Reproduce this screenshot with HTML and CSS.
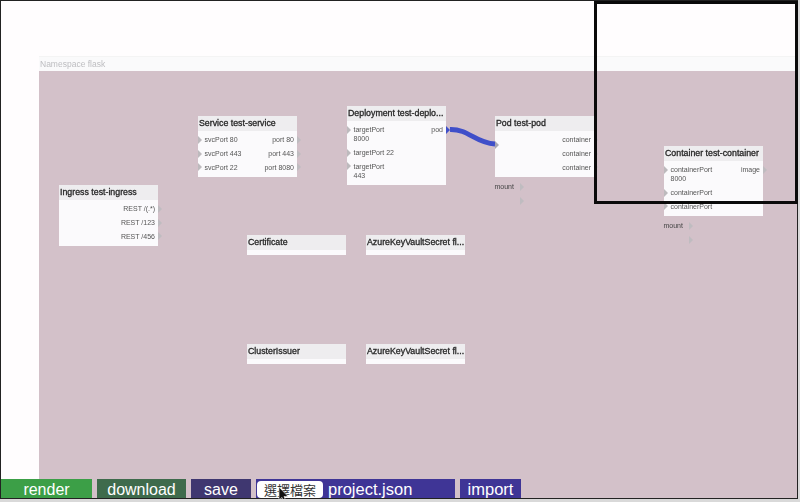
FILE: index.html
```html
<!doctype html>

<html>
    <head>
        <title>Kubernetes diagram</title>

        <link rel="stylesheet" href="styles.css">
    </head>

    <body>
        <div class="frame">
            <div class="main">
                <div class="sidebar"></div>

                <div class="namespace">
                    <div class="ns-title">Namespace flask</div>

                    <div class="canvas">
                        <svg class="links" width="758" height="407">
                            <path d="M411 58.5 C 430 58, 436 72, 456 73" />
                        </svg>

                        <div class="node ingress">
                            <div class="node-title">Ingress test-ingress</div>
                            <div class="row"><span></span><span class="out">REST /(.*)</span></div>
                            <div class="row"><span></span><span class="out">REST /123</span></div>
                            <div class="row"><span></span><span class="out">REST /456</span></div>
                        </div>

                        <div class="node service">
                            <div class="node-title">Service test-service</div>
                            <div class="row"><span class="in">svcPort 80</span><span class="out">port 80</span></div>
                            <div class="row"><span class="in">svcPort 443</span><span class="out">port 443</span></div>
                            <div class="row"><span class="in">svcPort 22</span><span class="out">port 8080</span></div>
                        </div>

                        <div class="node deployment">
                            <div class="node-title">Deployment test-deplo...</div>
                            <div class="row"><span class="in">targetPort<br>8000</span><span class="out active">pod</span></div>
                            <div class="row"><span class="in">targetPort 22</span><span></span></div>
                            <div class="row"><span class="in">targetPort<br>443</span><span></span></div>
                        </div>

                        <div class="node pod">
                            <div class="node-title">Pod test-pod</div>
                            <div class="pod-in"></div>
                            <div class="row"><span></span><span class="out">container</span></div>
                            <div class="row"><span></span><span class="out">container</span></div>
                            <div class="row"><span></span><span class="out">container</span></div>
                            <div class="mounts">
                                <div class="row"><span class="out">mount</span></div>
                                <div class="row"><span class="out">&nbsp;</span></div>
                            </div>
                        </div>

                        <div class="node container">
                            <div class="node-title">Container test-container</div>
                            <div class="row"><span class="in">containerPort<br>8000</span><span class="out">image</span></div>
                            <div class="row"><span class="in">containerPort</span><span></span></div>
                            <div class="row"><span class="in">containerPort</span><span></span></div>
                            <div class="mounts">
                                <div class="row"><span class="out">mount</span></div>
                                <div class="row"><span class="out">&nbsp;</span></div>
                            </div>
                        </div>

                        <div class="node cert">
                            <div class="node-title">Certificate</div>
                        </div>
                        <div class="node secret1">
                            <div class="node-title">AzureKeyVaultSecret fl...</div>
                        </div>
                        <div class="node issuer">
                            <div class="node-title">ClusterIssuer</div>
                        </div>
                        <div class="node secret2">
                            <div class="node-title">AzureKeyVaultSecret fl...</div>
                        </div>
                    </div>
                </div>
            </div>

            <div class="toolbar">
                <button class="btn render">render</button>
                <button class="btn download">download</button>
                <button class="btn save">save</button>
                <div class="btn file">
                    <span class="file-pick">選擇檔案</span>
                    <span>project.json</span>
                </div>
                <button class="btn import">import</button>
            </div>

            <div class="selection"></div>

            <svg class="cursor" width="12" height="18" viewBox="0 0 12 18">
                <path d="M1 1 L1 14 L4 11.5 L6 16 L8 15 L6 10.5 L10 10.5 Z" />
            </svg>
        </div>
    </body>
</html>
```

FILE: styles.css
```css
* {box-sizing: border-box;}

body {
margin: 0;
background-color: #d9d9d9;
font-family: "Liberation Sans", Arial, sans-serif;
}

.frame {
position: relative;
display: flex;
flex-direction: column;
width: 798px;
height: 499px;
border: 1px solid #222;
border-bottom: 0;
background-color: #fffdfe;
}

.main {
display: flex;
flex: 1;
min-height: 0;
}

.sidebar {width: 38px;}

.namespace {
display: flex;
flex-direction: column;
flex: 1;
padding-top: 55px;
}

.ns-title {
height: 15px;
padding-left: 1px;
font-size: 8.5px;
line-height: 15px;
color: #bdbdc0;
background-color: #fafafb;
border-top: 1px solid #f4f4f4;
filter: blur(0.3px);
}

.canvas {
position: relative;
flex: 1;
background-color: #d3c1c9;
filter: blur(0.3px);
}

.links {
position: absolute;
left: 0;
top: 0;
}

.links path {
fill: none;
stroke: #3f4fc9;
stroke-width: 5;
}

/* nodes sit on a free canvas */
.node {
position: absolute;
width: 99.5px;
padding-bottom: 2.6px;
background-color: #fbfafc;
font-size: 7px;
line-height: 9px;
color: #555;
}

.ingress {left: 19.5px; top: 114px;}
.service {left: 158.5px; top: 45px;}
.deployment {left: 307.5px; top: 35px;}
.pod {left: 455.5px; top: 45px;}
.container {left: 624.5px; top: 75px;}
.cert {left: 207.5px; top: 163.5px;}
.secret1 {left: 326.5px; top: 163.5px;}
.issuer {left: 207.5px; top: 272.5px;}
.secret2 {left: 326.5px; top: 272.5px;}

.cert, .secret1, .issuer, .secret2 {height: 20px;}

.node-title {
height: 15px;
margin-bottom: 2px;
padding-left: 1.5px;
font-size: 8.8px;
line-height: 15px;
color: #262626;
background-color: #eeedef;
white-space: nowrap;
-webkit-text-stroke: 0.3px #262626;
}

.row {
display: flex;
justify-content: space-between;
padding: 2.4px 0;
min-height: 13.8px;
}

.in {
position: relative;
padding-left: 7px;
}

.out {
position: relative;
padding-right: 3px;
margin-left: auto;
}

.in::before, .out::after, .pod-in::before {
content: "";
position: absolute;
top: 0.5px;
border-top: 4px solid transparent;
border-bottom: 4px solid transparent;
}

.in::before, .pod-in::before {
left: 0;
border-left: 4px solid #bdbabd;
}

.out::after {
right: -4px;
border-left: 4px solid #bfbcc0;
}

.out.active::after {border-left-color: #3f4fc9;}

.pod-in {position: relative;}

.pod-in::before {
top: 8px;
border-left-color: #a9a7b4;
}

.mounts {
position: absolute;
top: 100%;
left: 0;
width: 25px;
padding-top: 3px;
color: #444;
}

.mounts .out {
width: 100%;
margin-left: 0;
padding-right: 0;
}

.toolbar {
display: flex;
gap: 5px;
height: 20px;
border-bottom: 1px solid #222;
background-color: #d3c1c9;
}

.btn {
height: 19px;
padding: 0;
border: 0;
font-family: inherit;
font-size: 16px;
line-height: 21px;
color: #fff;
}

.render {width: 91px; background-color: #3c9f47;}
.download {width: 89px; background-color: #3f6b4c;}
.save {width: 60px; background-color: #3f3770;}

.file {
display: flex;
gap: 5px;
width: 199px;
padding-left: 1px;
font-size: 16.5px;
background-color: #3f3596;
}

.file-pick {
width: 66px;
height: 17px;
margin-top: 2px;
font-family: "Noto Sans CJK TC", sans-serif;
font-size: 13px;
line-height: 17px;
text-align: center;
color: #333;
background-color: #fff;
border-radius: 4px;
}

.import {
width: 61px;
font-size: 16.5px;
background-color: #3f3596;
}

.selection {
position: absolute;
left: 593px;
top: 0;
width: 204px;
height: 203px;
border: 3px solid #0a0a0a;
}

.cursor {
position: absolute;
left: 277px;
top: 485px;
}

.cursor path {
fill: #111;
stroke: #fff;
stroke-width: 0.6;
}
```
